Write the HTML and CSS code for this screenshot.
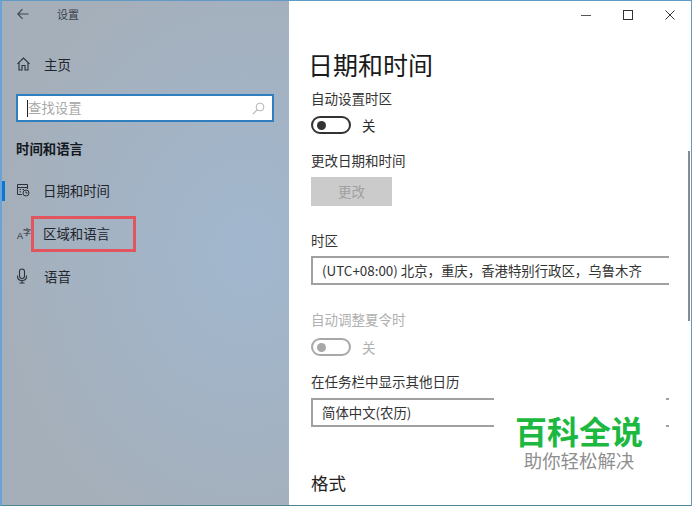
FILE: index.html
```html
<!DOCTYPE html>
<html lang="zh-CN">
<head>
<meta charset="utf-8">
<title>设置</title>
<link rel="stylesheet" href="styles.css">
</head>
<body>
<div class="window">
  <aside class="sidebar">
    <div class="titlebar">
      <svg class="back" width="12" height="12" viewBox="0 0 12 12"><path d="M11.500 6H1M5.500 1.200 .8 6 5.500 10.800" fill="none" stroke="#3c4550" stroke-width="1.100"/></svg>
      <span class="apptitle">设置</span>
    </div>
    <div class="home">
      <svg width="13" height="14" viewBox="0 0 13 14"><path d="M.5 6.800 6.500 1l6 5.800M2 5.500V13H5V8.500H8V13H11V5.500" fill="none" stroke="#2b3138" stroke-width="1.100"/></svg>
      <span>主页</span>
    </div>
    <div class="search">
      <i class="caret"></i><span class="placeholder">查找设置</span>
      <svg class="lens" width="13" height="13" viewBox="0 0 13 13"><circle cx="8" cy="5" r="3.900" fill="none" stroke="#b5b5b5"/><path d="M5.200 7.800 1 12" stroke="#b5b5b5" stroke-width="1.100"/></svg>
    </div>
    <h2 class="section">时间和语言</h2>
    <nav class="nav">
      <div class="item active">
        <svg width="14" height="14" viewBox="0 0 14 14" fill="none" stroke="#2b3138" stroke-width="1"><path d="M6 11.500H1.500V1.500H11.500V6M1.500 4.500H11.500M3.500 6.500H5M6.500 6.500H8M3.500 8.800H5"/><circle cx="10" cy="10" r="3"/><path d="M10 8.500V10H11.500"/></svg>
        <span>日期和时间</span>
      </div>
      <div class="item">
        <span class="langicon"><small>A</small><sup>字</sup></span>
        <span class="marked">区域和语言</span>
      </div>
      <div class="item">
        <svg width="14" height="16" viewBox="1 0 14 16" fill="none" stroke="#2b3138" stroke-width="1.100"><rect x="4.500" y="1" width="5" height="9.500" rx="2.500"/><path d="M2.500 7.500V8.500C2.500 11 4.500 12.500 7 12.500S11.500 11 11.500 8.500V7.500M7 12.500V15M4.500 15H9.500"/></svg>
        <span class="speech">语音</span>
      </div>
    </nav>
  </aside>
  <main class="main">
    <div class="controls">
      <svg width="10" height="10" viewBox="0 0 10 10"><path d="M0 5.500H10" stroke="#555" stroke-width="1"/></svg>
      <svg width="10" height="10" viewBox="0 0 10 10"><rect x=".5" y=".5" width="9" height="9" fill="none" stroke="#333"/></svg>
      <svg width="10" height="10" viewBox="0 0 10 10"><path d="M.5.500 9.500 9.500M9.500.500 .5 9.500" stroke="#333" stroke-width="1"/></svg>
    </div>
    <h1 class="title">日期和时间</h1>
    <div class="label first">自动设置时区</div>
    <div class="toggle"><span class="track"><i class="knob"></i></span><span>关</span></div>
    <div class="label change">更改日期和时间</div>
    <div class="button">更改</div>
    <div class="label zone">时区</div>
    <div class="select">(UTC+08:00) 北京，重庆，香港特别行政区，乌鲁木齐</div>
    <div class="label dst disabled">自动调整夏令时</div>
    <div class="toggle dim disabled"><span class="track"><i class="knob"></i></span><span>关</span></div>
    <div class="label cal">在任务栏中显示其他日历</div>
    <div class="select">简体中文(农历)</div>
    <h3 class="format">格式</h3>
    <div class="scrollbar"></div>
    <div class="watermark">
      <strong>百科全说</strong>
      <span>助你轻松解决</span>
    </div>
  </main>
</div>
</body>
</html>
```
FILE: styles.css
```css
* { box-sizing: border-box; }
html, body { margin: 0; padding: 0; }
body {
  width: 692px;
  height: 506px;
  overflow: hidden;
  font-family: "Noto Sans CJK SC", "Liberation Sans", sans-serif;
  color: #2a2a2a;
}
.window {
  display: flex;
  width: 692px;
  height: 506px;
  border: 1px solid #5f9bc4;
  border-bottom-color: #4d8595;
  border-left: 2px solid #6ba3d6;
  overflow: hidden;
}
.sidebar {
  width: 287px;
  flex: none;
  background: radial-gradient(ellipse 85% 60% at 85% 50%, #a1b7ce 0%, #a3b3c4 55%, #a5afba 100%);
  color: #1f262d;
  font-size: 13.400px;
  line-height: 20px;
  padding-left: 14px;
  position: relative;
}
.titlebar {
  display: flex;
  align-items: center;
  height: 26px;
}
.back { margin-left: 1px; }
.apptitle { margin-left: 28px; font-size: 11px; color: #3a4149; }
.home {
  display: flex;
  align-items: center;
  gap: 14px;
  margin-top: 23px;
  height: 28px;
  padding-left: 1px;
}
.search {
  display: flex;
  align-items: center;
  width: 258px;
  height: 28px;
  margin-top: 16px;
  border: 2px solid #2f7fc0;
  background: #fff;
  padding: 0 7px 0 9px;
  color: #a8a8a8;
}
.caret { width: 1px; height: 17px; background: #222; flex: none; }
.placeholder { flex: 1; padding-bottom: 2px; }
.section {
  margin: 16px 0 0;
  font-size: 13.400px;
  line-height: 20px;
  font-weight: 700;
  color: #14191f;
}
.nav { margin-top: 10px; }
.item {
  display: flex;
  align-items: center;
  gap: 13px;
  height: 43px;
  position: relative;
}
.item.active::before {
  content: "";
  position: absolute;
  left: -14px;
  top: 13px;
  width: 3px;
  height: 20px;
  background: #0b78d7;
}
.langicon {
  width: 14px;
  display: flex;
  align-items: flex-end;
  line-height: 1;
  padding: 4px 0 0 1px;
}
.langicon small { font-size: 9px; font-family: "Liberation Sans", sans-serif; }
.langicon sup { font-size: 8px; margin: 0 0 5px; }
.marked { position: relative; }
.marked::after {
  content: "";
  position: absolute;
  inset: -7px -26px -9px -12px;
  border: 3px solid #e2545e;
}
.speech { margin-left: 1px; }
.main {
  flex: 1;
  min-width: 0;
  background: #fff;
  position: relative;
  padding-left: 22px;
  font-size: 13.400px;
}
.controls {
  display: flex;
  justify-content: flex-end;
  gap: 32px;
  align-items: center;
  height: 27px;
  padding-right: 16px;
}
.title {
  margin: 16px 0 0 -3px;
  font-size: 25px;
  line-height: 40px;
  font-weight: 400;
  color: #1a1a1a;
}
.label { font-size: 13.500px; line-height: 20px; color: #333; }
.label.first { margin-top: 4px; }
.toggle {
  display: flex;
  align-items: center;
  gap: 11px;
  margin-top: 7px;
  height: 20px;
}
.toggle.dim { margin-top: 8px; }
.track {
  display: flex;
  align-items: center;
  width: 40px;
  height: 18px;
  border: 2px solid #333;
  border-radius: 9px;
  padding-left: 4px;
}
.knob { width: 9px; height: 9px; border-radius: 50%; background: #333; }
.label.change { margin-top: 15px; }
.button {
  width: 81px;
  height: 29px;
  margin-top: 7px;
  background: #cbcbcb;
  color: #a0a0a0;
  text-align: center;
  line-height: 29px;
}
.label.zone { margin-top: 24px; }
.select {
  width: 358px;
  height: 29px;
  margin-top: 6px;
  border: 2px solid #a0a0a0;
  border-right: 0;
  padding-left: 9px;
  line-height: 25px;
  color: #333;
}
.label.dst { margin-top: 24px; }
.label.disabled, .toggle.disabled { color: #b0b0b0; }
.toggle.disabled .track { border-color: #a8a8a8; }
.toggle.disabled .knob { background: #a8a8a8; }
.label.cal { margin-top: 14px; }
.label.cal + .select { margin-top: 7px; }
.format {
  margin: 43px 0 0;
  font-size: 17.500px;
  line-height: 26px;
  font-weight: 400;
  color: #222;
}
.scrollbar {
  position: absolute;
  right: 1px;
  top: 150px;
  width: 2px;
  height: 170px;
  background: #8a8a8a;
}
.watermark {
  position: absolute;
  left: 205px;
  top: 396px;
  width: 172px;
  height: 100px;
  background: #fff;
  display: flex;
  flex-direction: column;
  align-items: center;
  padding: 13px 2px 0 0;
}
.watermark strong {
  font-size: 32px;
  line-height: 40px;
  color: #1cb83f;
  font-weight: 700;
}
.watermark span {
  font-size: 18.400px;
  line-height: 21px;
  color: #8f8f8f;
}
```
